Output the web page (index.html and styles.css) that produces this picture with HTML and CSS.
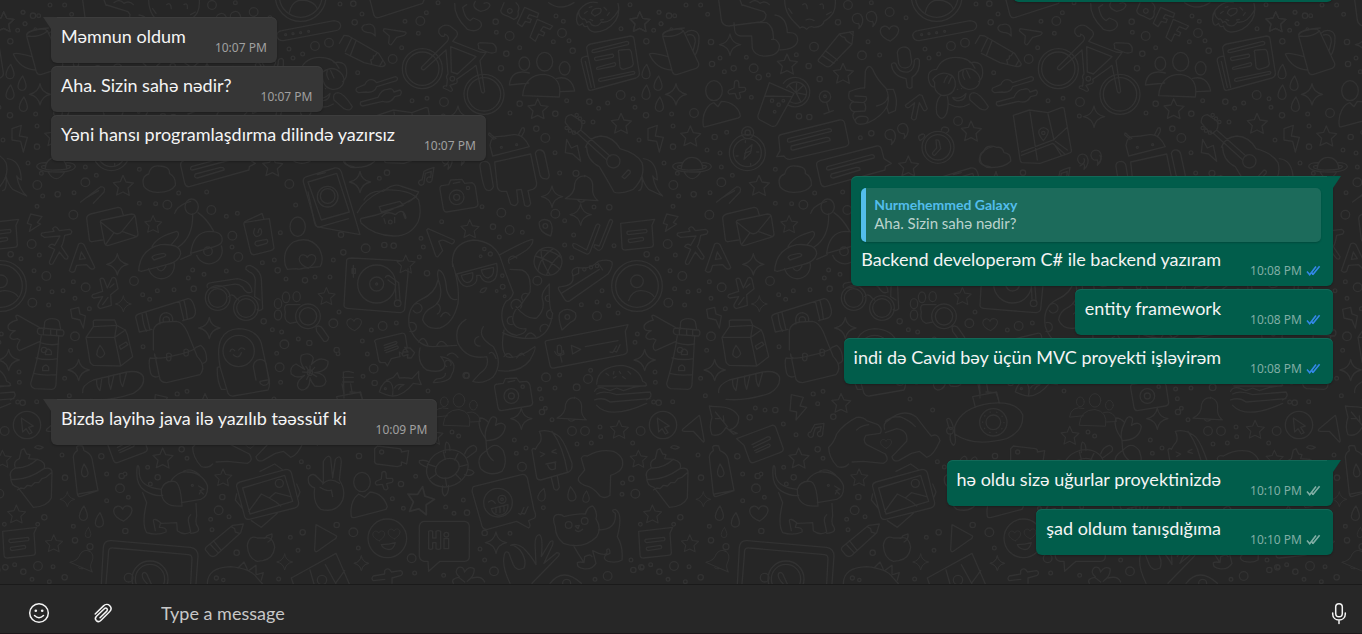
FILE: index.html
```html
<!DOCTYPE html>
<html lang="az">
<head>
<meta charset="utf-8">
<title>Chat</title>
<link rel="stylesheet" href="styles.css">
</head>
<body>
<svg class="wallpaper" aria-hidden="true">
<defs>
<path id="star" d="M-1-30L8-10L30-7L14 8L18 30L-1 20L-20 29L-15 7L-30-8L-9-11Z"/>
<path id="spark" d="M0-32Q4-5 32 0Q5 5 0 32Q-5 5-32 0Q-5-5 0-32Z"/>
<path id="drop" d="M2-22C10-6 13 2 12 10A12 12 0 0 1-12 8C-11-2-6-12 2-22Z"/>
<path id="heart" d="M3 25C-12 20-28 8-27-6C-25-22-6-24 0-10C6-26 28-22 28-6C26 8 14 18 3 25Z"/>
<path id="quote" d="M4 26C18 14 18-2 14-10A15 15 0 1 0 4 10Q8 16 4 26Z"/>
<path id="plus" d="M-6-26Q2-32 6-24L7-8L24-8Q30-2 24 4L8 8L12 22Q6 30 0 24L-5 10L-22 12Q-30 6-22 0L-8-6Z"/>
<path id="bell" d="M-50 36Q-20 20-22-8Q-16-34 12-32Q36-22 32 6Q30 28 48 42ZM-14 38Q-6 52 8 42M8-34V-30"/>
<g id="note"><path d="M-50-34L52-46L44-28L48 30Q48 38 38 38L-36 46Q-46 46-46 36L-50-34Z"/><path d="M-30-10L26-16Q32-10 26-6L-26 0Q-34-2-30-10ZM-26 14L16 8Q22 14 16 18L-22 24Q-30 20-26 14Z"/></g>
<g id="people"><ellipse cx="-61" cy="-34" rx="16" ry="20"/><ellipse cy="-40" rx="24" ry="28"/><ellipse cx="60" cy="-20" rx="16" ry="20"/><path d="M-66 62Q-60-2 0-2Q54 6 44 66ZM-48 24L-106 30Q-100-20-46-6M36 10Q80 0 90 48L48 50"/></g>
<g id="camera"><path d="M-50-24Q-52-36-40-36L-24-38L-18-52L16-54L24-42L46-44Q54-40 56-32L64 20Q64 28 54 30L-30 44Q-38 44-40 34ZM-10-42L10-46"/><circle cy="0" r="22"/><circle r="9"/><circle cx="34" cy="-28" r="5"/></g>
<path id="dots-small" d="M69 37h0M116 47h0M107 342h0M111 378h0M84 489h0M124 520h0M150 15h0M194 15h0M75 71h0M53 91h0M215 43h0M252 174h0M265 215h0M331 172h0M397 225h0M481 164h0M346 292h0M272 397h0M213 450h0M252 459h0M256 501h0M289 526h0M418 508h0M222 578h0M128 588h0M706 8h0M696 125h0M731 165h0M810 53h0M867 147h0M879 174h0M908 162h0M1020 12h0M673 413h0M536 579h0M620 576h0M1086 42h0M1215 64h0M1279 38h0M1314 8h0M1255 100h0M1205 143h0M1073 218h0M1236 302h0M1281 295h0M1330 348h0M1489 97h0M1559 143h0M1668 48h0M1690 64h0M1660 125h0M1707 122h0M1530 339h0M1700 302h0M1796 325h0M1823 309h0M1899 296h0M1905 322h0M1863 86h0M1890 14h0M1977 37h0M1983 71h0M1779 366h0M1917 420h0M1665 458h0M1679 519h0M1138 535h0M111 619h0M467 611h0M418 610h0M679 649h0M712 640h0M63 776h0M118 765h0M102 812h0M116 866h0M156 875h0M189 872h0M220 845h0M225 895h0M146 915h0M268 926h0M578 810h0M612 823h0M565 834h0M428 884h0M449 898h0M472 872h0M522 869h0M696 741h0M787 788h0M823 780h0M679 813h0M858 837h0M841 698h0M887 615h0M945 831h0M990 831h0M1000 780h0M1017 936h0M817 989h0M845 996h0M895 1017h0M830 1060h0M842 1147h0M1014 1061h0M429 1040h0M212 1051h0M194 1135h0M57 1116h0M58 1147h0M208 1187h0M532 1182h0M561 1174h0M1171 666h0M1263 715h0M1270 741h0M1258 771h0M1325 665h0M1498 711h0M1567 697h0M1446 620h0M1585 651h0M1694 662h0M1721 705h0M1694 735h0M1715 773h0M1782 621h0M1842 737h0M1744 914h0M1791 906h0M1826 917h0M1854 939h0M1806 872h0M1114 990h0M1087 1023h0M1102 1062h0M1089 1129h0M1189 969h0M1284 1173h0M1679 1125h0M1619 1167h0M1665 1164h0M1772 1111h0M1905 1027h0M1912 1002h0M53 1206h0M110 1205h0M186 1365h0M320 1422h0M320 1502h0M385 1492h0M220 1579h0M113 1573h0M13 1573h0M443 1402h0M451 1452h0M375 1422h0M632 1558h0M636 1589h0M687 1550h0M561 1375h0M358 1224h0M387 1230h0M480 1304h0M442 1272h0M531 1182h0M545 1211h0M822 1197h0M890 1230h0M904 1385h0M925 1401h0M871 1612h0M894 1651h0M836 1737h0M18 1701h0M44 1694h0M159 1700h0M96 1738h0M148 1745h0M1356 1296h0M1376 1308h0M1543 1320h0M1578 1344h0M1549 1360h0M1624 1196h0M1636 1225h0M1656 1259h0M1731 1332h0M1774 1329h0M1800 1281h0M1802 1310h0M1898 1329h0M1247 1429h0M1177 1496h0M1210 1525h0M1337 1521h0M1362 1540h0M1390 1500h0M1630 1523h0M1868 1449h0M1866 1483h0M1530 1600h0M1440 1647h0M1454 1680h0M1331 1726h0M1244 1719h0M1075 1644h0M1893 1680h0M1785 1738h0"/>
<path id="dots-medium" d="M31 124h0M30 346h0M225 126h0M228 192h0M293 205h0M99 47h0M606 67h0M518 198h0M551 237h0M368 232h0M489 349h0M520 351h0M706 400h0M236 411h0M111 440h0M1060 11h0M1064 67h0M1487 65h0M1519 161h0M1503 205h0M1559 311h0M1718 152h0M1666 341h0M1768 305h0M1609 386h0M1161 518h0M173 583h0M132 1050h0M833 811h0M581 866h0M915 841h0M791 964h0M928 1029h0M1023 704h0M1030 757h0M1153 735h0M1181 737h0M1281 820h0M1479 680h0M1828 622h0M1940 763h0M1010 1050h0M1400 1127h0M1124 1149h0M68 1208h0M304 1369h0M195 1433h0M133 1552h0M225 1621h0M376 1593h0M667 1491h0M70 1715h0M194 1732h0M1010 1575h0M908 1597h0M710 1658h0M418 1230h0M341 1252h0M592 1250h0M545 1348h0M365 1428h0M473 1432h0M1894 1436h0M1077 1368h0M1203 1452h0M1401 1538h0M1454 1599h0M1626 1236h0M1900 1710h0M1924 1702h0"/>
<path id="dots-large" d="M534 140h0M678 166h0M761 36h0M636 15h0M945 138h0M987 128h0M353 205h0M174 339h0M112 555h0M256 547h0M966 363h0M868 552h0M1178 177h0M1261 63h0M1529 108h0M1686 99h0M1332 306h0M1862 285h0M1636 414h0M95 732h0M220 644h0M139 828h0M257 862h0M402 843h0M502 614h0M634 630h0M697 707h0M715 771h0M97 908h0M225 1009h0M853 1033h0M839 1102h0M1000 970h0M1097 745h0M1504 638h0M1529 690h0M1666 641h0M1612 842h0M1791 948h0M1148 978h0M1121 1106h0M1638 1132h0M1764 1137h0M360 1465h0M656 1531h0M114 1698h0M386 1733h0M1716 1293h0M1755 1293h0M1922 1293h0M1566 1400h0M1906 1481h0M1235 1675h0M1482 1714h0M1823 1728h0M1060 1597h0"/>
<g id="tile" transform="scale(.33333)">
<use href="#dots-small" class="dot small"/><use href="#dots-medium" class="dot medium"/><use href="#dots-large" class="dot large"/>
<use href="#dots-small" class="hole small"/><use href="#dots-medium" class="hole medium"/><use href="#dots-large" class="hole large"/>
<g transform="translate(12)">
<use href="#drop" x="18" y="215"/><use href="#drop" x="54" y="250"/><use href="#drop" x="18" y="277"/><use href="#drop" x="58" y="313"/>
<use href="#spark" x="108" y="283"/><use href="#spark" x="270" y="134"/><use href="#plus" x="290" y="270"/>
<use href="#star" x="442" y="192"/><use href="#star" x="610" y="220"/><use href="#star" x="152" y="408"/><use href="#star" x="358" y="556"/><use href="#star" x="994" y="393"/><use href="#star" x="806" y="498"/><use href="#star" y="65"/>
<use href="#quote" x="652" y="60"/><use href="#quote" x="694" y="54"/><use href="#quote" x="750" y="408"/><use href="#quote" x="788" y="390"/><use href="#heart" x="748" y="98"/>
<path d="M24 386L52 376L46 408L70 412L58 456L50 424L24 420Z"/>
<path d="M68 108C66 92 120 82 130 92L176 190Q178 200 168 205L110 224Q100 224 97 215ZM68 108C90 112 120 106 130 92M90 88Q92 80 98 86M84 170C60 165 40 155 28 162C40 190 60 208 95 210M135 100C150 85 175 90 177 112C178 140 170 160 165 165M142 105C158 100 167 110 166 125L160 150"/>
<ellipse cx="222" cy="272" rx="25" ry="30"/><path d="M190 378C184 340 205 312 222 308L234 320L244 304C275 304 298 325 301 348Q300 352 294 354L198 380Q190 382 190 378Z"/>
<path d="M236 0L244 60Q248 78 266 78L360 66Q378 62 378 44L372 35L308 15M300 0L306 16M282 68L284 90Q286 106 302 108L335 108L337 145Q345 170 380 168Q420 165 418 135Q410 115 395 118M345 68L380 68Q402 80 400 118M405 45Q440 50 442 98Q475 95 473 122Q468 148 420 150M330 8Q345-5 360 10Q375 0 388 14"/>
<path d="M434 0C434 50 470 70 480 84Q490 76 500 88Q510 76 522 82Q550 80 552 64C580 48 588 30 586 0M446 26L456 40M498 60Q510 54 522 62M560 44L574 36M540 14Q552 6 550 26M488 14Q500 4 502 26"/>
<path d="M536 178L598 102L640 94L636 132L574 196Q566 204 556 198L538 186Q532 182 536 178ZM556 152L592 180M546 166L582 190M598 102Q604 112 614 112Q616 124 636 132M628 96L640 106"/>
<circle cx="890" cy="-12" r="76"/><circle cx="890" cy="-12" r="64"/><path d="M856 38Q864 0 895 0Q930 2 940 26"/>
<path d="M834 92L990 62Q1010 64 1010 78Q1008 90 996 92L838 122Q820 122 818 106Q820 94 834 92Z"/><circle cx="845" cy="104" r="3"/><circle cx="867" cy="101" r="3"/><circle cx="890" cy="98" r="3"/><circle cx="914" cy="94" r="3"/>
<path d="M772 158A20 20 0 0 1 810 153L815 185A20 20 0 0 1 776 190ZM754 194A8 8 0 0 1 768 192Q776 220 805 216Q824 208 823 182A8 8 0 0 1 838 180Q842 215 816 232L816 262Q810 268 802 262L798 236Q760 230 754 194Z"/>
<path d="M628 275Q660 262 674 264L676 214Q686 188 698 208Q708 235 738 265Q750 290 742 318Q725 350 685 368Q650 380 645 362Q650 345 678 350Q690 356 680 368M628 275Q620 300 640 304Q628 312 630 322Q632 334 645 335Q632 344 645 362M640 306L670 308Q684 300 678 290L645 288M645 335L675 333Q680 322 674 310M742 268L760 268Q775 300 766 332L746 340L740 320M710 318Q740 312 744 290"/>
<path d="M388 248L462 280L410 374Q404 382 394 378L360 360Q352 356 354 346ZM374 288L456 290M430 250A44 44 0 1 1 446 316M440 262A32 32 0 1 1 452 306M468 278L490 256M468 278L498 284M468 278L482 304M468 278L470 248M468 278L448 258"/><circle cx="396" cy="302" r="5"/><circle cx="430" cy="302" r="4"/><circle cx="416" cy="314" r="5"/><circle cx="404" cy="335" r="4"/>
<circle cx="555" cy="290" r="17"/><circle cx="555" cy="289" r="4"/><path d="M560 308L568 336M552 342L580 332"/>
<path d="M796 316L838 284L846 286L862 326Q856 336 850 330L838 308L828 356Q820 364 814 354L824 308L808 322Q798 326 796 316Z"/>
<path d="M890 208Q905 172 948 172Q990 172 1005 205M890 208Q860 210 866 240Q870 260 884 262M990 188Q1030 180 1028 220Q1028 235 1016 245M878 238Q900 212 925 222Q948 228 946 258Q938 290 905 286Q880 276 884 248ZM912 248Q915 235 922 228M926 250L934 232M956 216Q985 195 1008 216Q1025 232 1018 250Q1010 270 985 268Q952 262 956 216ZM974 238Q965 225 970 212M990 234L980 212M902 286Q885 305 890 340Q906 370 920 340Q928 310 922 290M1002 278Q1020 280 1045 320Q1040 336 1020 326L990 300Q984 280 1002 278M926 312Q960 330 988 312M938 292Q960 300 978 280Q976 300 958 302Q944 304 938 292M952 268h1M964 266h1"/>
<path d="M430 402L598 360Q612 358 614 370L626 426Q628 436 616 440L450 478Q440 480 432 468L410 470L420 452L416 412Q416 404 430 402ZM444 416L566 386Q576 386 574 394L450 426Q438 428 444 416ZM454 438L560 412Q572 412 570 422L460 450Q450 452 454 438ZM540 482L710 438Q720 436 724 446L732 476L754 490L736 500L735 510L556 560Q546 562 542 550L530 496Q528 486 540 482ZM562 500L696 464Q706 466 702 474L566 510Q556 510 562 500ZM574 522L650 502Q662 502 660 510L580 534Q568 534 574 522Z"/>
<circle cx="322" cy="458" r="54"/><circle cx="322" cy="458" r="42"/><circle cx="323" cy="398" r="18"/><circle cx="323" cy="398" r="8"/><path d="M312 478L318 450L336 434L332 458ZM314 460L334 452M316 422V428M332 490V496M288 468H294M350 456H356"/>
<path d="M124 504A32 32 0 0 1 188 504M126 488Q98 488 98 500Q106 516 156 516Q208 516 214 500Q212 488 188 488M126 496Q108 496 114 504Q130 512 156 510Q195 510 200 500Q200 496 188 496M132 516Q156 556 182 516"/>
<path d="M420 560Q410 530 434 522Q440 494 466 498Q500 500 496 520Q516 530 514 556Q500 578 460 577Q430 576 420 560ZM1050 500Q1010 496 1020 470Q1030 446 1058 440"/>
<circle cx="894" cy="442" r="48"/><circle cx="894" cy="442" r="38"/><path d="M888 420Q896 418 898 426L902 446L884 466Q876 466 878 458L890 444ZM840 422Q828 405 850 402Q860 406 848 416ZM904 390Q906 376 924 384Q930 394 920 398"/>
<path d="M230 606L290 560Q306 560 300 576L268 610M246 594L284 572"/>
</g>
<path d="M80 104Q84 88 145 84M910 546Q908 534 920 530L1004 504Q1018 502 1024 516L1080 704L962 682Q950 684 946 670ZM924 546L1010 520L1048 636L964 660ZM952 524L976 518"/><circle cx="983" cy="590" r="31"/><circle cx="983" cy="588" r="22"/>
<g transform="translate(1032)">
<path d="M78 0L90 46Q94 56 106 52L236 10L240 0M66 74Q84 68 92 84L94 108Q84 96 72 98Q52 94 54 82Q58 74 66 74ZM120 86L184 96Q190 100 180 106L158 112L142 134Q136 136 134 128L136 108L118 92ZM-14 130L0 106L14 108L104 160L124 192Q122 200 110 200L60 188L4 160M22 116L4 154M36 122L20 164M98 160Q94 170 88 168Q90 178 80 180L84 194M116 182L108 196"/>
<path d="M332 10Q330 50 370 88Q400 100 412 78Q414 66 402 60L388 54L378 62Q362 54 356 22L368 14M394 4Q380 24 410 34Q434 30 438 16Q434 4 420 10"/>
<path d="M480 8L470 32Q472 44 490 48L510 58Q526 52 522 34Q530 20 516 8M498 26A7 7 0 1 1 497 26M542 22L520 70L534 80L544 64L558 68L562 58L550 54L556 44L580 52L584 40ZM580 58L558 112L574 124L584 102L598 108L602 98L590 92L598 80L618 88L626 78ZM614 8Q650 34 690 8"/>
<path d="M706 30Q730 0 760 8M822 10Q834 60 786 88Q740 108 730 78Q720 84 716 70Q702 84 698 62Q696 44 706 30Q700 46 716 58Q724 54 728 68Q738 60 742 74Q760 84 772 66Q800 72 824 30M742 40Q746 22 770 26Q776 40 752 48ZM722 40L730 34M736 22L744 20M780 22L788 30M790 46L796 38M770 60L778 58M738 58L746 62"/>
<use href="#star" x="888" y="65"/><use href="#star" x="582" y="326"/><use href="#star" x="832" y="370"/>
<circle cx="235" cy="206" r="60"/><circle cx="235" cy="206" r="50"/><circle cx="420" cy="283" r="60"/><circle cx="420" cy="283" r="50"/>
<path d="M234 200L310 124Q320 110 302 102Q304 112 292 108Q280 98 286 86Q300 70 318 78L338 94Q344 104 334 114L326 124L408 156L426 158L408 182L422 274Q418 284 412 274L396 196L386 204L338 238Q344 250 330 252L318 256L326 270Q322 278 312 270L298 264Q296 256 308 258L310 238Q304 230 312 222L306 150L242 208Q234 212 232 204ZM320 140L396 170L340 222L322 216ZM404 138Q398 130 410 128L446 130Q460 138 456 156Q444 162 430 156L404 146Z"/><circle cx="325" cy="236" r="7"/>
<path d="M38 264L62 254Q72 232 92 242L98 248L154 230Q164 232 158 242L98 260Q90 280 66 276L44 278Q32 274 38 264ZM50 306L102 292Q112 268 130 268Q146 262 150 276L168 270Q176 276 168 286L152 290Q140 312 116 304L56 318Q46 316 50 306Z"/>
<use href="#people" x="602" y="225"/>
<path d="M740 132L860 108Q868 108 870 116L886 218Q888 228 876 234L744 270Q734 274 732 264L712 184Q710 172 722 170L732 168L728 144Q728 136 740 132ZM732 168L752 262M724 184L742 262M746 150L848 124Q858 126 852 134L750 158Q740 158 746 150ZM754 172L806 162Q812 166 806 172L756 182Q748 178 754 172ZM760 202L812 188Q818 192 812 198L762 208Q754 208 760 202ZM766 236L868 214Q876 216 870 222L770 244Q760 244 766 236ZM824 158Q820 150 830 150L856 148Q860 150 862 156L868 192Q866 200 858 202L838 208Q830 208 828 200Z"/>
<path d="M100 346L148 330L204 338L246 322L252 324L274 450Q276 458 266 460L180 490L126 488Q120 486 120 478ZM150 336L172 480M204 342L222 420M124 456L220 420L262 382M124 466L218 430L254 462M226 424L262 450M222 432L244 466"/><circle cx="190" cy="399" r="5"/><path d="M190 422Q172 400 178 390Q190 376 204 390Q208 400 190 422ZM4 490Q-6 460 10 456Q20 430 50 442Q68 440 72 458Q94 460 92 484Q70 506 20 502Z"/>
<use href="#spark" x="342" y="350"/><use href="#quote" x="308" y="482"/><use href="#quote" x="348" y="470"/>
</g>
<g transform="translate(1050)">
<path d="M428 468L420 436Q424 408 442 410L464 408L490 404Q520 400 538 440L428 468M432 418L416 404Q416 394 424 404L438 416M506 404L516 384Q526 380 522 396L514 410M390 500Q388 484 406 484Q418 486 420 498L430 560Q424 576 410 570Q400 568 390 500ZM434 486L542 462L560 550Q560 564 548 568L534 572L542 610Q538 624 524 616L514 568L500 570L504 606Q498 624 482 612L470 574L454 574Q444 572 442 560ZM556 460Q560 448 572 450Q582 452 584 462L598 526Q596 540 584 536Q574 536 570 524Z"/><circle cx="454" cy="442" r="3"/><circle cx="500" cy="434" r="3"/>
<path d="M646 368Q644 346 664 344L692 362Q700 374 692 390L780 468M682 400L768 478M692 390L680 400Q668 398 646 368M706 442Q716 412 752 408Q790 410 810 446Q860 460 876 488Q888 530 850 568Q810 584 792 576Q766 530 748 500Q710 480 710 440M816 530L834 510Q844 512 840 520L824 536ZM880 476Q920 480 922 540Q912 536 908 528Q916 570 938 588L896 568Q880 550 876 528Q880 570 866 572"/><circle cx="790" cy="484" r="20"/><circle cx="680" cy="345" r="5"/><circle cx="690" cy="356" r="5"/><circle cx="700" cy="366" r="5"/><circle cx="650" cy="384" r="5"/><circle cx="660" cy="392" r="5"/><circle cx="672" cy="398" r="5"/>
<path d="M650 418L664 444L682 436L692 484L668 462L646 458ZM234 508L252 502L246 540A8 8 0 1 1 242 532L244 514L226 520L222 548A8 8 0 1 1 216 540L222 514ZM42 600Q60 570 100 574Q130 548 152 558L206 576Q200 590 176 606M282 498Q300 488 294 476M336 490Q350 480 342 466"/>
<use href="#spark" x="30" y="546"/><use href="#spark" x="606" y="590"/><use href="#bell" x="696" y="560"/><circle cx="678" cy="520" r="9"/><use href="#camera" x="320" y="592"/>
</g>
<g transform="translate(0 600)">
<path d="M92 42L126 50L112 68L122 72L88 94L94 74L82 70ZM212 328L236 322L240 342L256 348L250 384L240 360L216 354Z"/>
<path d="M124 106Q122 98 132 98L162 94L158 86Q164 76 172 84L178 92L208 88Q220 92 212 102L194 106Q190 130 184 140L204 170Q204 180 194 176L178 156L158 192Q148 196 148 186L164 148L146 140Q152 128 164 136L180 108L134 112ZM236 132Q244 126 252 134L284 202Q280 210 272 206L260 194L230 196L224 214Q214 220 208 212ZM238 178L244 156L256 176Z"/>
<path d="M280 124Q270 128 268 118L260 56Q260 46 272 42L354 22Q364 22 366 32L370 46M302 70Q298 62 308 60L394 42Q404 42 406 50L414 102Q414 110 404 112L326 136Q316 138 314 130ZM302 66L342 98Q356 106 366 94L402 50M342 98L318 132M366 94L410 110M280 124L308 120"/>
<use href="#star" transform="translate(460 72) scale(.85)"/><use href="#spark" x="352" y="193"/><use href="#spark" transform="translate(370 312) scale(.75)"/><use href="#spark" x="628" y="384"/><use href="#spark" x="236" y="510"/>
<path d="M416 212Q420 148 482 134Q540 130 542 160Q538 186 500 194L424 214ZM456 140Q470 110 530 94Q540 98 532 112L514 134M456 172Q458 164 490 160Q504 164 492 170L462 180ZM446 206A38 38 0 0 0 522 188M472 206Q486 222 498 198M536 140Q580 110 578 42M542 178L574 164M572 160Q580 96 628 94Q670 94 666 124Q664 136 628 144ZM590 166A38 38 0 0 0 664 138M640 92Q620 56 594 38M524 40Q530 20 560 8L572 4"/><circle cx="624" cy="154" r="13"/><ellipse cx="575" cy="20" rx="20" ry="23"/>
<path d="M732 74Q730 66 740 62L786 40L792 58L808 56L822 144Q820 150 812 152L764 164Q756 166 752 158ZM732 68L792 58M764 86Q756 104 770 110Q788 106 784 90Q778 78 774 98M768 124L800 118Q806 124 800 130L772 138Q760 134 768 124Z"/>
<ellipse cx="893" cy="80" rx="23" ry="29"/><path d="M856 196Q846 150 880 126Q930 106 958 146Q974 180 960 200L914 204Q898 210 888 206L862 208Z"/><use href="#heart" transform="translate(922 182) scale(.9)"/>
<path d="M924-24L944 70Q948 84 962 80L1046 56"/>
<circle cx="3" cy="258" r="76"/><circle cx="3" cy="258" r="64"/><circle cx="3" cy="244" r="19"/><path d="M-22 302Q-12 270 16 272Q44 274 54 290"/>
<path d="M300 238Q306 232 312 238L322 264L336 234Q344 230 348 238L354 266L332 284L334 316L300 326Q292 322 294 314L308 290L282 294Q272 292 278 284L308 274ZM324 292L308 314M330 262L342 252"/>
<path d="M118 382L54 346Q42 344 52 360Q22 368 24 382Q24 394 46 392Q28 402 30 412Q36 422 52 416L60 420Q44 444 58 452L120 424M132 388L134 366Q140 356 156 356Q174 356 178 366L182 388M114 386Q108 400 120 404L188 408Q196 398 188 390L122 384ZM130 386V404M152 388V406M170 388V408M124 406Q116 470 92 550Q92 562 104 566L156 568Q168 566 168 552L176 408M120 428Q150 438 176 432M108 474Q140 482 172 476M100 520Q130 528 168 524M136 464V454Q144 440 154 454V464ZM128 512V502Q138 488 146 502V512Z"/>
<path d="M280 366Q278 360 288 360L344 360L350 376L376 390L382 404L398 470L362 498L280 496Q272 492 270 486L258 412L280 380ZM280 380L350 376L344 412L258 412M344 412L362 498M344 412L376 390M300 436Q290 450 290 464Q302 482 314 462Q314 454 300 436ZM358 438L378 426L384 434L362 448Z"/>
<path d="M408 356Q404 346 416 342L564 296Q578 294 586 330Q588 348 576 354L548 362M408 356L418 396L456 388M426 340Q430 380 440 394M438 338L450 390M538 304L552 362M552 302Q560 330 562 356M480 372Q474 340 500 338Q520 342 518 364M490 366Q486 350 500 350Q510 352 508 364M460 450V392Q464 370 492 366L530 364Q550 368 562 396L592 470Q620 500 600 524L500 548Q480 548 478 530L464 462Q460 480 500 472L550 460Q584 450 586 444M470 476L450 474Q444 484 452 520Q458 534 474 530M588 442L602 436Q620 450 620 480Q616 490 606 490M500 462Q508 456 514 464L512 480Q504 486 500 478ZM552 450Q560 444 566 452L564 466Q556 472 552 464Z"/>
<path d="M248 578Q244 556 280 540L380 516Q420 510 430 530Q436 560 400 580Q330 604 270 598M290 540Q288 560 300 572L306 532M326 528Q324 548 332 568L342 524M360 520Q358 544 368 560L380 516"/>
<path d="M622 262Q618 250 634 248L712 236Q754 244 756 276Q740 284 728 262Q714 248 694 254L634 264M738 208Q736 196 750 196Q780 208 784 236L788 326Q776 336 772 328M780 300L764 290L766 240Q764 222 748 216L738 208M686 290Q696 278 708 294L716 300"/><circle cx="653" cy="294" r="37"/><circle cx="653" cy="294" r="28"/><circle cx="738" cy="324" r="37"/><circle cx="738" cy="324" r="28"/>
<ellipse cx="858" cy="292" rx="11" ry="16"/><ellipse cx="890" cy="290" rx="11" ry="15"/><ellipse cx="834" cy="311" rx="11" ry="15"/><ellipse cx="834" cy="345" rx="11" ry="15"/><path d="M900 314L862 314Q850 316 856 336Q850 362 870 370L890 366M948 380Q960 374 968 386L986 412Q984 426 972 424L950 394Z"/><circle cx="924" cy="349" r="37"/><circle cx="924" cy="349" r="26"/><use href="#star" transform="translate(980 288) scale(.85)"/>
<circle cx="716" cy="453" r="47"/><path d="M660 500Q640 390 716 386Q770 388 784 430L808 540Q810 560 804 570L700 588Q690 590 684 580L660 500L652 502Q650 540 664 568L676 568M768 540L760 500Q762 480 780 478Q796 480 798 490L806 538Q808 556 790 556Q778 552 780 544L802 540M690 454Q696 442 704 452M716 450Q724 438 734 448M700 464Q716 480 724 458"/>
<path d="M904 466Q930 454 940 474Q938 484 934 494Q960 466 984 484Q986 514 944 518Q976 520 978 544Q974 564 944 558Q936 550 930 534Q930 570 904 570Q884 560 898 540L914 526Q890 538 874 522Q868 500 888 492L914 508Q896 484 904 466ZM930 518L918 500M930 518L944 502M930 518L950 530M930 518L920 538M930 518L908 516M930 518V498"/><circle cx="930" cy="518" r="8"/>
<path d="M1032 316L1040 180Q1042 174 1056 174L1200 182M1032 316Q1032 326 1050 326L1200 338Q1212 336 1214 328L1224 224L1224 206M1030 520Q1030 514 1045 514L1060 518M1028 532H1060M1028 546H1060M1030 516L1032 594"/>
</g>
<g transform="translate(1050 600)">
<path d="M22 38Q40 0 100-30Q180-34 206 0Q216 40 204 66Q180 110 130 108Q70 106 34 70Q26 54 40 54Q120 40 200-10M96 50Q110 30 136 44Q160 20 168 54M102 56L106 70M134 52V68M160 42L166 56M88 20L150 4L160 16L94 36Z"/>
<path d="M234 86L312 120Q316 126 306 132L284 122Q278 118 266 124L278 152L264 170Q258 172 256 164L230 90Z"/>
<use href="#star" transform="translate(360 86) scale(.9)"/><use href="#star" transform="translate(168 192) scale(.9)"/><use href="#spark" x="692" y="44"/><use href="#spark" x="884" y="480"/><use href="#heart" transform="translate(12 372) scale(.8)"/>
<circle cx="80" cy="252" r="57"/><circle cx="80" cy="252" r="21"/><circle cx="80" cy="252" r="3"/><path d="M106 232Q112 222 122 230L146 248L150 300M114 240L136 256L138 298M10 196V232M6 206H16V220H6Z"/><circle cx="143" cy="310" r="10"/>
<path d="M308 200Q300 130 370 120Q430 124 450 170Q470 230 490 278Q486 296 468 304Q450 330 458 366Q466 402 500 406Q530 400 528 386Q490 390 488 356Q490 330 510 318L540 276Q546 220 516 210L480 208M308 190Q330 260 324 310Q310 370 270 384Q230 390 218 360Q220 334 250 320Q280 300 270 256Q258 220 266 210Q286 216 290 270Q300 304 320 298M264 240Q256 280 214 298Q168 320 178 380Q200 440 250 440L320 436M348 358Q310 380 324 430Q350 480 410 470Q420 500 390 520L368 544Q400 554 430 530Q460 490 430 440Q380 410 400 380M462 390Q450 450 470 470Q500 480 554 440Q560 444 540 480Q510 520 446 512M478 180Q506 166 530 150Q552 130 548 118Q530 120 450 164M498 320Q530 360 560 354Q586 330 578 300Q570 280 598 252Q596 330 608 340Q600 400 560 414Q500 420 458 398M210 444Q200 490 230 510Q270 520 282 504Q290 490 272 470Q330 480 304 526Q300 546 250 548Q256 534 270 536Q288 530 286 520M320 222L440 190Q448 240 420 246Q400 250 390 226L380 226Q386 256 350 260Q330 258 320 222ZM334 226L368 218Q372 244 352 248Q338 246 334 226ZM394 210L430 202Q434 228 414 234Q398 232 394 210ZM390 276Q396 262 410 264Q404 282 390 276Z"/>
<path d="M190 332A14 14 0 1 0 196 312M180 368A14 14 0 1 1 180 394M206 426Q222 400 234 438M260 438Q272 410 292 438M260 310A18 18 0 0 1 262 342M272 350Q286 326 300 346M488 326A16 16 0 1 1 512 324M518 300A12 12 0 1 1 536 284M478 190A12 12 0 1 1 500 174M490 372A12 12 0 1 1 486 350M526 412Q540 386 558 412M572 394A12 12 0 0 1 596 380M606 356A12 12 0 1 1 600 330M596 304A8 8 0 1 1 594 286M462 470Q474 450 488 472M500 474Q516 450 522 466M386 410A12 12 0 1 0 390 438M418 460Q430 450 438 476M292 466Q308 450 324 472M290 500A10 10 0 1 1 302 496"/>
<circle cx="403" cy="147" r="5"/><circle cx="421" cy="162" r="6"/><circle cx="392" cy="169" r="4"/><circle cx="457" cy="227" r="5"/><circle cx="458" cy="260" r="7"/><circle cx="440" cy="273" r="4"/><circle cx="464" cy="289" r="4"/><circle cx="348" cy="526" r="9"/>
<circle cx="594" cy="184" r="42"/><path d="M556 168Q600 180 630 208M570 150Q610 150 634 174M564 212Q570 170 610 146M590 224Q600 190 630 164M574 150Q570 180 600 224M602 108Q564 96 568 66Q580 52 600 64Q612 80 602 108Z"/><circle cx="586" cy="78" r="7"/>
<path d="M668 136Q668 128 678 132L710 150L738 76Q744 68 750 76L720 156Q714 166 706 160L672 144ZM734 134L748 138L778 62Q784 54 788 64L756 144Q748 156 740 148L732 142Z"/><use href="#note" x="862" y="104"/>
<path d="M668 224Q660 208 682 202Q720 210 744 184Q776 176 786 186Q790 200 774 222L660 302Q650 308 644 298L626 268Q622 260 634 260Q676 256 668 224ZM686 206V220L668 228M634 280L748 208M742 186L758 210M636 390Q622 350 630 338Q650 318 676 338Q684 358 660 368Z"/><circle cx="703" cy="208" r="5"/><circle cx="723" cy="202" r="5"/><circle cx="741" cy="198" r="5"/><circle cx="652" cy="351" r="7"/>
<path d="M590 422L834 374L826 394L832 452Q832 460 820 464L612 504Q602 506 600 496L586 430Q584 424 590 422ZM622 438Q630 432 634 440L636 458Q628 466 622 458ZM614 454Q620 474 642 462L640 452M632 470L636 486M664 436L692 448L668 462ZM706 440L804 422M780 456L788 458L800 438M794 454L800 456L810 434"/>
<path d="M76 428Q70 422 80 418L154 400Q164 398 166 406L172 444L160 450L158 462L148 456L150 470L124 476L112 498L106 488L94 488Q88 488 86 480ZM102 436L138 424Q144 426 138 432L104 444M104 452L142 438Q148 442 142 446L108 458M164 442L180 444L194 458L184 474L172 474L174 464L160 468Q152 462 160 456L174 456Z"/>
<path d="M88 576Q96 542 130 532L142 518L148 534Q172 532 186 536L206 514L206 534L214 554L190 550Q150 600 108 584ZM110 540Q134 550 128 584M134 564Q140 550 162 554Q150 558 146 568"/><circle cx="106" cy="566" r="3"/>
<use href="#people" transform="translate(327 630) scale(.72)"/><use href="#camera" transform="translate(484 588)"/>
<path d="M740 552Q742 500 816 496Q868 504 878 544Q892 548 888 558L744 558M734 574Q740 560 760 564L780 572L800 564L820 572L850 562L890 556M740 582Q760 570 800 584L900 576Q910 590 890 600M734 600Q760 590 780 606L900 596M740 616Q780 660 890 610"/><path d="M768 520L776 526M792 514L790 522M808 514L812 520M834 514L842 522M790 534L798 530M818 530L826 536"/>
<use href="#bell" transform="translate(666 622) scale(.9)"/><circle cx="680" cy="562" r="10"/><path d="M0 576L30 578L38 600"/>
</g>
<g transform="translate(42 1152)">
<circle cx="39" cy="123" r="41"/><path d="M22 102L26 144L36 134L46 150L54 146L44 130L58 126ZM148 94L98 136Q94 142 104 142L130 142L160 174Q164 174 162 166L150 100ZM178 66L192 68Q250 66 266 98Q268 130 238 138L262 148L250 150L228 130Q212 160 186 152Q176 130 186 100ZM196 84L232 128M222 116L220 96M212 104H196M424 32L460 40L450 66L470 70L438 108L440 84L420 80ZM494 122L522 118L518 148A8 8 0 1 1 510 142L514 128L496 132L490 150A8 8 0 1 1 482 144Z"/>
<path d="M260 164L366 124Q374 122 378 132L400 194Q400 202 390 206L310 236Q302 238 298 228L282 184ZM306 182L354 158Q364 158 360 166L310 190M314 200L356 180Q364 184 358 188L318 206"/>
<use href="#star" transform="translate(574 57) scale(.95)"/><use href="#star" x="447" y="222"/><use href="#star" transform="translate(628 280) scale(.85)"/><use href="#star" transform="translate(120 478) scale(.85)"/><use href="#star" transform="translate(8 390) scale(.9)"/>
<path d="M596 240Q584 254 562 248Q536 220 536 190Q552 176 560 150Q580 120 620 100Q640 98 650 110L684 122Q700 136 690 148L648 154Q636 170 650 182L706 210Q720 230 700 238L640 232L606 234M620 138Q630 126 656 122M704 136Q698 118 714 110Q760 70 800 100Q830 140 844 156Q864 146 870 170Q850 216 830 220L808 202L784 208L746 230Q728 234 726 218L770 172Q776 140 740 134L706 146M706 112Q720 98 750 98Q780 110 796 128"/><use href="#heart" transform="translate(708 178) scale(.6)"/>
<path d="M914 128Q934 70 1020 58Q1100 50 1118 92Q1122 140 1070 164Q970 190 914 150ZM976 70L968 38L1040 24L1048 58M990 28L984 0M1014 24L1010 0M890 106Q900 94 910 130Q900 146 894 122ZM914 150Q920 180 910 184Q896 170 902 150"/><circle cx="900" cy="140" r="10"/><circle cx="1030" cy="115" r="41"/><circle cx="1030" cy="115" r="22"/><circle cx="1030" cy="115" r="32" stroke-dasharray="1 19"/>
<path d="M188 188Q194 182 206 186L210 200Q230 208 234 224L252 320L198 338Q192 338 190 330L178 220Q178 208 190 200ZM194 330L248 320M210 240Q196 270 208 278Q222 280 222 266Q220 254 210 240ZM62 190Q70 180 88 190Q78 200 62 190Z"/>
<use href="#spark" transform="translate(160 346) scale(.7)"/><use href="#drop" x="208" y="388"/><use href="#drop" x="256" y="408"/><use href="#drop" transform="translate(222 446) scale(.7)"/><use href="#heart" x="326" y="386"/>
<path d="M370 246Q362 300 392 320Q420 338 446 334M370 246Q376 240 376 270Q380 310 442 316M386 326L398 356Q382 420 398 446Q430 456 456 444Q460 430 436 430L440 416Q420 400 418 410L424 440M440 418Q460 418 488 416L490 440Q510 456 530 444L524 416Q520 400 530 392M546 358L548 396Q542 420 552 430Q560 446 530 448M442 316Q450 290 480 292Q500 294 504 366Q440 372 442 316M470 292Q490 262 520 264Q564 266 580 304Q584 336 560 346L502 356M508 262Q530 250 556 272M554 306L570 316L558 320L568 330M556 330L562 318"/><circle cx="535" cy="304" r="3"/>
<use href="#note" x="16" y="476"/><use href="#bell" transform="translate(212 522) rotate(20) scale(.75)"/><circle cx="228" cy="488" r="9"/>
<path d="M262 600L268 490Q270 468 292 470L530 490Q552 494 552 516L546 600M276 600L284 500Q286 490 298 492L524 512Q534 514 534 524L530 600M386 568Q380 580 400 600M386 568Q396 560 402 578L412 600"/><circle cx="408" cy="585" r="54"/><circle cx="408" cy="585" r="44"/>
<path d="M668 308Q666 298 678 294L816 256Q828 256 832 266L854 356Q854 368 842 372L706 406Q696 408 692 398ZM686 312L812 274L836 352L708 390ZM704 382L742 330L766 342L786 354L800 366M766 342L784 326L830 338M738 262L782 240L804 256M712 410L742 430L790 388M668 330L664 348L684 372M848 300L858 324L852 340"/><circle cx="796" cy="298" r="12"/>
<path d="M576 490L656 424L688 420L680 446L606 514Q596 522 586 512L576 500Q572 496 576 490ZM588 480L612 506M598 470L622 500M652 428L662 434L664 444L676 448M730 462Q706 452 700 484Q702 524 730 532L746 530Q778 524 782 490Q776 456 752 462ZM750 464Q756 462 758 456L774 450Q776 466 762 474M906 422L968 456Q968 464 958 468L910 502Q902 506 902 496Z"/>
<use href="#spark" transform="translate(812 534) scale(.75)"/><use href="#spark" transform="translate(1042 538) scale(.7)"/>
<path d="M580 600Q580 550 650 548Q710 554 728 580L746 600M672 552L690 534L700 556M704 560L726 544L726 570M728 572L748 566L742 588M832 582L966 508L1006 600M832 582L838 600M888 558L900 600M934 542L966 600M992 560L966 596"/><circle cx="607" cy="582" r="6"/><circle cx="628" cy="588" r="5"/><circle cx="924" cy="588" r="14"/>
</g>
<path d="M970 1384Q984 1360 992 1374L998 1434L1006 1378Q1022 1360 1024 1386L1018 1440Q1038 1470 1028 1500Q1010 1540 962 1528Q938 1510 944 1464Q920 1456 926 1430Q940 1416 952 1432L970 1450ZM968 1452Q990 1430 1018 1450M960 1462Q980 1476 994 1470L998 1490"/>
<g transform="translate(1050 1170)">
<path d="M74 176L82 168L148 176Q156 178 154 186L176 182L170 222L154 216L154 226L142 230L80 222Q72 220 74 210Z"/><circle cx="95" cy="186" r="6"/>
<ellipse cx="36" cy="276" rx="25" ry="29"/><path d="M4 380Q-2 334 26 312L44 322L60 306Q100 310 112 350L108 358L16 382Q6 384 4 380Z"/>
<use href="#plus" x="102" y="273"/><use href="#star" transform="translate(212 330) rotate(10) scale(1.35)"/><use href="#star" transform="translate(252 136) scale(.9)"/><use href="#star" transform="translate(808 118) scale(.9)"/><use href="#star" transform="translate(866 206) scale(.85)"/><use href="#spark" x="514" y="86"/><use href="#spark" x="438" y="458"/><use href="#spark" transform="translate(34 520) scale(.7)"/>
<ellipse cx="292" cy="235" rx="64" ry="54" transform="rotate(-25 292 235)"/><ellipse cx="292" cy="235" rx="37" ry="28" transform="rotate(-25 292 235)"/><path d="M286 188Q284 160 290 156Q300 160 300 182M344 192Q350 172 370 166Q384 170 378 184L350 204M352 238Q370 240 372 248Q362 262 344 254M278 288Q274 310 284 318Q296 314 296 286M232 232Q204 222 208 212Q224 208 238 216M286 208L280 186M314 210L324 190M328 230L352 224M316 252L332 268M286 264L290 288M260 252L240 266M256 230L232 222"/>
<path d="M408 148Q380 110 390 84Q404 84 416 98Q426 70 440 86Q440 96 436 106Q460 92 466 110Q460 150 410 152M416 98Q400 130 408 152L410 180Q414 200 430 212M410 182Q436 150 460 182Q474 220 456 244Q420 262 392 236Q376 200 410 182"/>
<path d="M370 290Q364 300 368 310L396 408Q400 420 412 418L500 394L536 414Q544 410 536 392L554 384Q560 376 552 360L532 264Q526 250 514 254Z"/><circle cx="444" cy="338" r="43"/><circle cx="456" cy="328" r="12"/><circle cx="456" cy="328" r="4"/><path d="M416 336Q426 326 436 340M424 356L474 344Q474 376 446 376Q428 374 424 356ZM438 354V368M450 350V368M462 348V364M506 370L512 374L522 352M516 370L524 372L534 350"/>
<path d="M568 124Q600 116 630 142Q646 160 666 220Q668 240 656 246L572 270Q562 270 560 262L546 180Q550 172 556 178Q562 166 572 154Q576 140 568 124ZM606 124Q640 170 652 246M604 264L612 296Q622 306 628 292L622 258M570 186L584 192L572 200M606 184L618 178M606 186L620 190M588 222L618 216M592 222Q598 246 616 236L616 218"/>
<path d="M694 206Q696 194 712 198Q750 176 790 184Q826 200 816 232Q810 248 782 256L780 316Q766 328 750 318Q730 290 704 286Q680 276 686 262L704 240Z"/><use href="#drop" transform="translate(576 314) rotate(12) scale(.9)"/><use href="#drop" transform="translate(664 312) rotate(-12)"/><use href="#drop" transform="translate(708 320) scale(.8)"/>
<path d="M616 410Q604 380 620 374Q636 372 642 380Q680 370 706 372Q712 350 728 348Q744 366 738 386Q756 416 740 440Q700 480 640 460Q616 440 616 410M746 420Q800 420 796 370Q780 360 796 358Q820 370 802 440Q820 470 816 510Q800 520 774 514Q758 508 766 496L780 490Q780 470 770 480Q776 500 746 490L728 482L738 520Q726 540 700 536Q680 534 682 518Q690 514 702 518L684 490L670 466M702 518L704 500Q722 490 726 500M676 408L688 406L684 416ZM676 420Q684 430 698 418"/><circle cx="656" cy="405" r="10"/><circle cx="704" cy="393" r="10"/>
<path d="M890 262Q884 244 904 234Q896 214 916 206L922 180L930 176L938 192L948 194L944 206L970 208Q998 216 990 236Q1016 230 1014 250L1012 324Q1000 350 958 352L912 292Q890 288 890 262M904 234Q940 236 970 208M892 268Q940 272 990 236M910 300L920 294L930 296L940 286L952 288L962 278L974 278L984 266L996 262L1012 248"/>
<circle cx="112" cy="445" r="58"/><use href="#heart" transform="translate(86 436) scale(.65)"/><use href="#heart" transform="translate(132 430) scale(.65)"/><path d="M94 464Q116 464 136 458Q130 482 114 478Q98 476 94 464Z"/>
<path d="M222 394H344Q358 396 358 410V500Q358 512 344 514H270L236 544L234 514H222Q208 510 208 498V408Q210 396 222 394ZM236 424Q242 420 248 424V444H258V424Q264 420 272 424V476Q266 480 258 476V458H248V476Q242 480 236 476ZM282 446H296V476H282Z"/><circle cx="289" cy="434" r="7"/>
<path d="M70 558L104 552L104 542Q112 532 120 540L124 546L152 542Q162 548 154 556L126 564L126 580M104 568L70 572Q62 566 70 558M310 580Q302 566 326 562L344 576M328 560Q310 546 326 532Q340 528 344 546Q356 526 372 536Q376 556 352 574M366 564Q396 556 404 576M480 580Q456 530 462 500Q464 480 476 488L490 524Q500 546 522 534Q532 510 510 480Q490 462 482 466Q496 458 520 474Q546 500 558 524L556 480Q552 436 568 434Q580 440 574 500L600 456Q612 446 608 464L582 520L620 488Q636 488 620 504L546 580M600 580Q640 530 694 580"/><circle cx="650" cy="580" r="12"/>
</g>
</g>
</defs>
<use href="#tile"/><use href="#tile" x="-636"/><use href="#tile" x="636"/><use href="#tile" x="1272"/>
</svg>
<svg class="defs" aria-hidden="true"><symbol id="ticks" viewBox="0 0 15 12"><path d="M1 6.5L3.7 9.7L10 1.5M6.7 9.8L13.6 1.2M6.2 7.7L6.9 9.7" fill="none" stroke="currentColor" stroke-width="1.6"/></symbol></svg>
<main class="chat">
<div class="bubble out previous"></div>
<div class="group">
<article class="bubble in tail"><div class="body"><p>Məmnun oldum</p><time>10:07 PM</time></div></article>
<article class="bubble in"><div class="body"><p>Aha. Sizin sahə nədir?</p><time>10:07 PM</time></div></article>
<article class="bubble in"><div class="body"><p>Yəni hansı programlaşdırma dilində yazırsız</p><time>10:07 PM</time></div></article>
</div>
<div class="group">
<article class="bubble out tail"><blockquote class="quoted"><b>Nurmehemmed Galaxy</b><span>Aha. Sizin sahə nədir?</span></blockquote><div class="body"><p>Backend developerəm C# ile backend yazıram</p><time>10:08 PM</time><svg class="ticks read" role="img" aria-label="Read"><use href="#ticks"/></svg></div></article>
<article class="bubble out"><div class="body"><p>entity framework</p><time>10:08 PM</time><svg class="ticks read" role="img" aria-label="Read"><use href="#ticks"/></svg></div></article>
<article class="bubble out"><div class="body"><p>indi də Cavid bəy üçün MVC proyekti işləyirəm</p><time>10:08 PM</time><svg class="ticks read" role="img" aria-label="Read"><use href="#ticks"/></svg></div></article>
</div>
<div class="group">
<article class="bubble in tail"><div class="body"><p>Bizdə layihə java ilə yazılıb təəssüf ki</p><time>10:09 PM</time></div></article>
</div>
<div class="group">
<article class="bubble out tail"><div class="body"><p>hə oldu sizə uğurlar proyektinizdə</p><time>10:10 PM</time><svg class="ticks" role="img" aria-label="Delivered"><use href="#ticks"/></svg></div></article>
<article class="bubble out"><div class="body"><p>şad oldum tanışdığıma</p><time>10:10 PM</time><svg class="ticks" role="img" aria-label="Delivered"><use href="#ticks"/></svg></div></article>
</div>
</main>
<form class="composer">
<button type="button" aria-label="Emoji"><svg viewBox="0 0 24 24"><circle cx="12" cy="12" r="9.3"/><path d="M7.5 14.5Q12 19 16.500 14.500"/><circle class="eye" cx="8.800" cy="9.700" r="1.300"/><circle class="eye" cx="15.200" cy="9.700" r="1.300"/></svg></button>
<button type="button" aria-label="Attach"><svg viewBox="0 0 24 24"><path d="M4.200 13L12.500 4.900C14.200 3.300 17 3 18.800 4.700C20.500 6.500 20.300 9 18.500 10.800L9.800 19.500C8.600 20.700 6.600 20.800 5.300 19.600C4.100 18.300 4.300 16.400 5.500 15.200L13.300 7.700C14 7 15.200 6.900 15.900 7.600C16.600 8.400 16.500 9.400 15.800 10.100L9 16.800"/></svg></button>
<input type="text" aria-label="Message" placeholder="Type a message">
<button class="voice" type="button" aria-label="Record voice message"><svg viewBox="0 0 24 24"><rect x="8.700" y="2.800" width="6.600" height="13" rx="3.300"/><path d="M5.700 12V13C5.700 21 18.300 21 18.300 13V12M12 19V22.500"/></svg></button>
</form>
</body>
</html>
```
FILE: styles.css
```css
* { box-sizing: border-box; }
body {
  margin: 0;
  height: 100vh;
  display: flex;
  flex-direction: column;
  position: relative;
  overflow: hidden;
  background: #262626;
  color: #f4f4f4;
  font-family: Lato, "Noto Sans", sans-serif;
}
.wallpaper {
  position: absolute;
  inset: 0;
  width: 100%;
  height: 100%;
  fill: none;
  stroke: #323232;
  stroke-width: 4;
  stroke-linecap: round;
  stroke-linejoin: round;
}
.dot.small { stroke-width: 15; }
.dot.medium { stroke-width: 20; }
.dot.large { stroke-width: 30; }
.hole { stroke: #262626; }
.hole.small { stroke-width: 7; }
.hole.medium { stroke-width: 12; }
.hole.large { stroke-width: 22; }
.defs { position: absolute; width: 0; height: 0; }
.chat {
  position: relative;
  flex: 1;
  min-height: 0;
  display: flex;
  flex-direction: column;
  justify-content: flex-end;
  gap: 15px;
  padding: 0 29px 29px 51px;
  overflow: hidden;
}
.group { display: flex; flex-direction: column; gap: 3px; }
.bubble {
  position: relative;
  flex: none;
  border-radius: 6px;
}
.in {
  align-self: flex-start;
  padding: 7px 10px;
  background: #363636;
  box-shadow: inset 0 1px #3d3d3d, 0 1px 2px rgba(0, 0, 0, .25);
}
.out {
  align-self: flex-end;
  padding: 7px 12px 7px 10px;
  background: #015d4b;
  box-shadow: inset 0 1px #136958, 0 1px 2px rgba(0, 0, 0, .25);
}
.previous { width: 320px; height: 46px; }
.tail::before {
  content: "";
  position: absolute;
  top: 0;
  width: 14px;
  height: 12px;
  background: inherit;
}
.in.tail::before { left: -8px; clip-path: polygon(0 0, 100% 0, 100% 100%, 8px 100%); }
.out.tail::before { right: -8px; clip-path: polygon(0 0, 100% 0, 6px 100%, 0 100%); }
.body { display: flex; min-height: 32px; }
.body p { margin: 0; font-size: 18px; line-height: 24px; white-space: nowrap; }
.body time {
  align-self: flex-end;
  margin-left: 29px;
  font-family: "Noto Sans", sans-serif;
  font-size: 12px;
  line-height: 16px;
  white-space: nowrap;
  color: #a0a0a0;
}
.out time { color: #80aea5; }
.ticks { align-self: flex-end; width: 15px; height: 12px; margin: 0 0 2px 4px; color: #80aea5; }
.read { color: #3488e8; }
.quoted {
  display: flex;
  flex-direction: column;
  margin: 5px 0;
  padding: 7px 8px 9px;
  border-left: 5px solid #53bdeb;
  border-radius: 5px;
  background: #1c6b5b;
  box-shadow: 0 1px 2px rgba(0, 0, 0, .2);
  line-height: 19px;
}
.quoted b { font-size: 14px; font-weight: 700; color: #53bdeb; }
.quoted span { font-size: 15px; color: #bbd3ce; }
.composer {
  position: relative;
  flex: none;
  display: flex;
  align-items: center;
  height: 50px;
  padding: 7px 0 0 7px;
  border-top: 1px solid #1a1a1a;
  border-bottom: 1px solid #1d171a;
  background: #272727;
}
.composer button {
  display: flex;
  align-items: center;
  justify-content: center;
  width: 64px;
  height: 40px;
  padding: 0;
  border: 0;
  background: none;
}
.composer .voice { width: 46px; }
.composer svg { width: 24px; height: 24px; fill: none; stroke: #f4f4f4; stroke-width: 1.5; stroke-linecap: round; }
.composer .eye { fill: #f4f4f4; stroke: none; }
.composer input {
  flex: 1;
  min-width: 0;
  height: 40px;
  padding: 0 26px;
  border: 0;
  outline: 0;
  background: none;
  color: #f4f4f4;
  font: 18px Lato, "Noto Sans", sans-serif;
}
.composer input::placeholder { color: #c8c8c8; opacity: 1; }
```
